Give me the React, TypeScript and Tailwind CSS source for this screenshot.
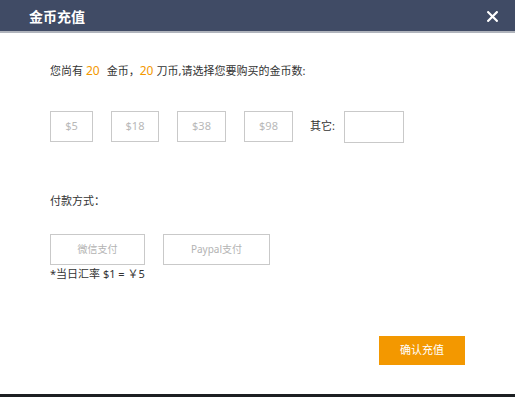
import React from "react";

const amounts = [
  { label: "$5", w: "w-[43px]" },
  { label: "$18", w: "w-[48px]" },
  { label: "$38", w: "w-[49px]" },
  { label: "$98", w: "w-[49px]" },
];

const payments = [
  { label: "微信支付", w: "w-[95px]" },
  { label: "Paypal支付", w: "w-[107px]" },
];

export default function App() {
  return (
    <div
      className="w-full h-[397px] flex flex-col bg-white text-[#333]"
      style={{ fontFamily: '"Noto Sans", "Noto Sans CJK SC", sans-serif' }}
    >
      {/* Header */}
      <div className="h-[31px] shrink-0 bg-[#404b65] flex items-center justify-between pl-[29px] pr-[17px]">
        <span className="text-[14px] font-bold text-white leading-none mt-[2px]">
          金币充值
        </span>
        <svg width="11" height="11" viewBox="0 0 11 11" className="mt-[1px]">
          <path
            d="M1.2 1.2 L9.8 9.8 M9.8 1.2 L1.2 9.8"
            stroke="#fff"
            strokeWidth="2.2"
            strokeLinecap="square"
          />
        </svg>
      </div>
      <div className="h-[2px] shrink-0 bg-[#b0b4bc]" />

      {/* Body */}
      <div className="flex-1 flex flex-col pl-[50px] pr-[50px]">
        <p className="mt-[30px] text-[11px] leading-[16px]">
          您尚有
          <span className="ml-[3px] mr-[7px] text-[#f39800] text-[12px]">20</span>
          金币，
          <span className="mr-[3px] text-[#f39800] text-[12px]">20</span>
          刀币,请选择您要购买的金币数:
        </p>

        <div className="mt-[32px] h-[31px] flex items-center">
          <div className="flex items-center gap-[18px]">
            {amounts.map((a) => (
              <button
                key={a.label}
                className={`${a.w} h-[31px] border border-[#c9c9c9] text-[11px] text-[#b8b8b8] flex items-center justify-center`}
              >
                {a.label}
              </button>
            ))}
          </div>
          <span className="ml-[17px] text-[11px]">其它:</span>
          <input
            type="text"
            className="ml-[9px] w-[60px] h-[32px] border border-[#c9c9c9] outline-none"
          />
        </div>

        <p className="mt-[51px] text-[11px] leading-[16px]">付款方式：</p>

        <div className="mt-[25px] flex items-center gap-[18px]">
          {payments.map((p) => (
            <button
              key={p.label}
              className={`${p.w} h-[31px] border border-[#c9c9c9] text-[10px] text-[#b3b3b3] flex items-center justify-center`}
            >
              {p.label}
            </button>
          ))}
        </div>

        <p className="mt-[2px] text-[11px] leading-[14px]">*当日汇率 $1 = ￥5</p>

        <button className="mt-[55px] self-end w-[86px] h-[29px] bg-[#f39800] text-white text-[11px] flex items-center justify-center">
          确认充值
        </button>
      </div>

      <div className="h-[3px] shrink-0 bg-[#1c1f22]" />
    </div>
  );
}
